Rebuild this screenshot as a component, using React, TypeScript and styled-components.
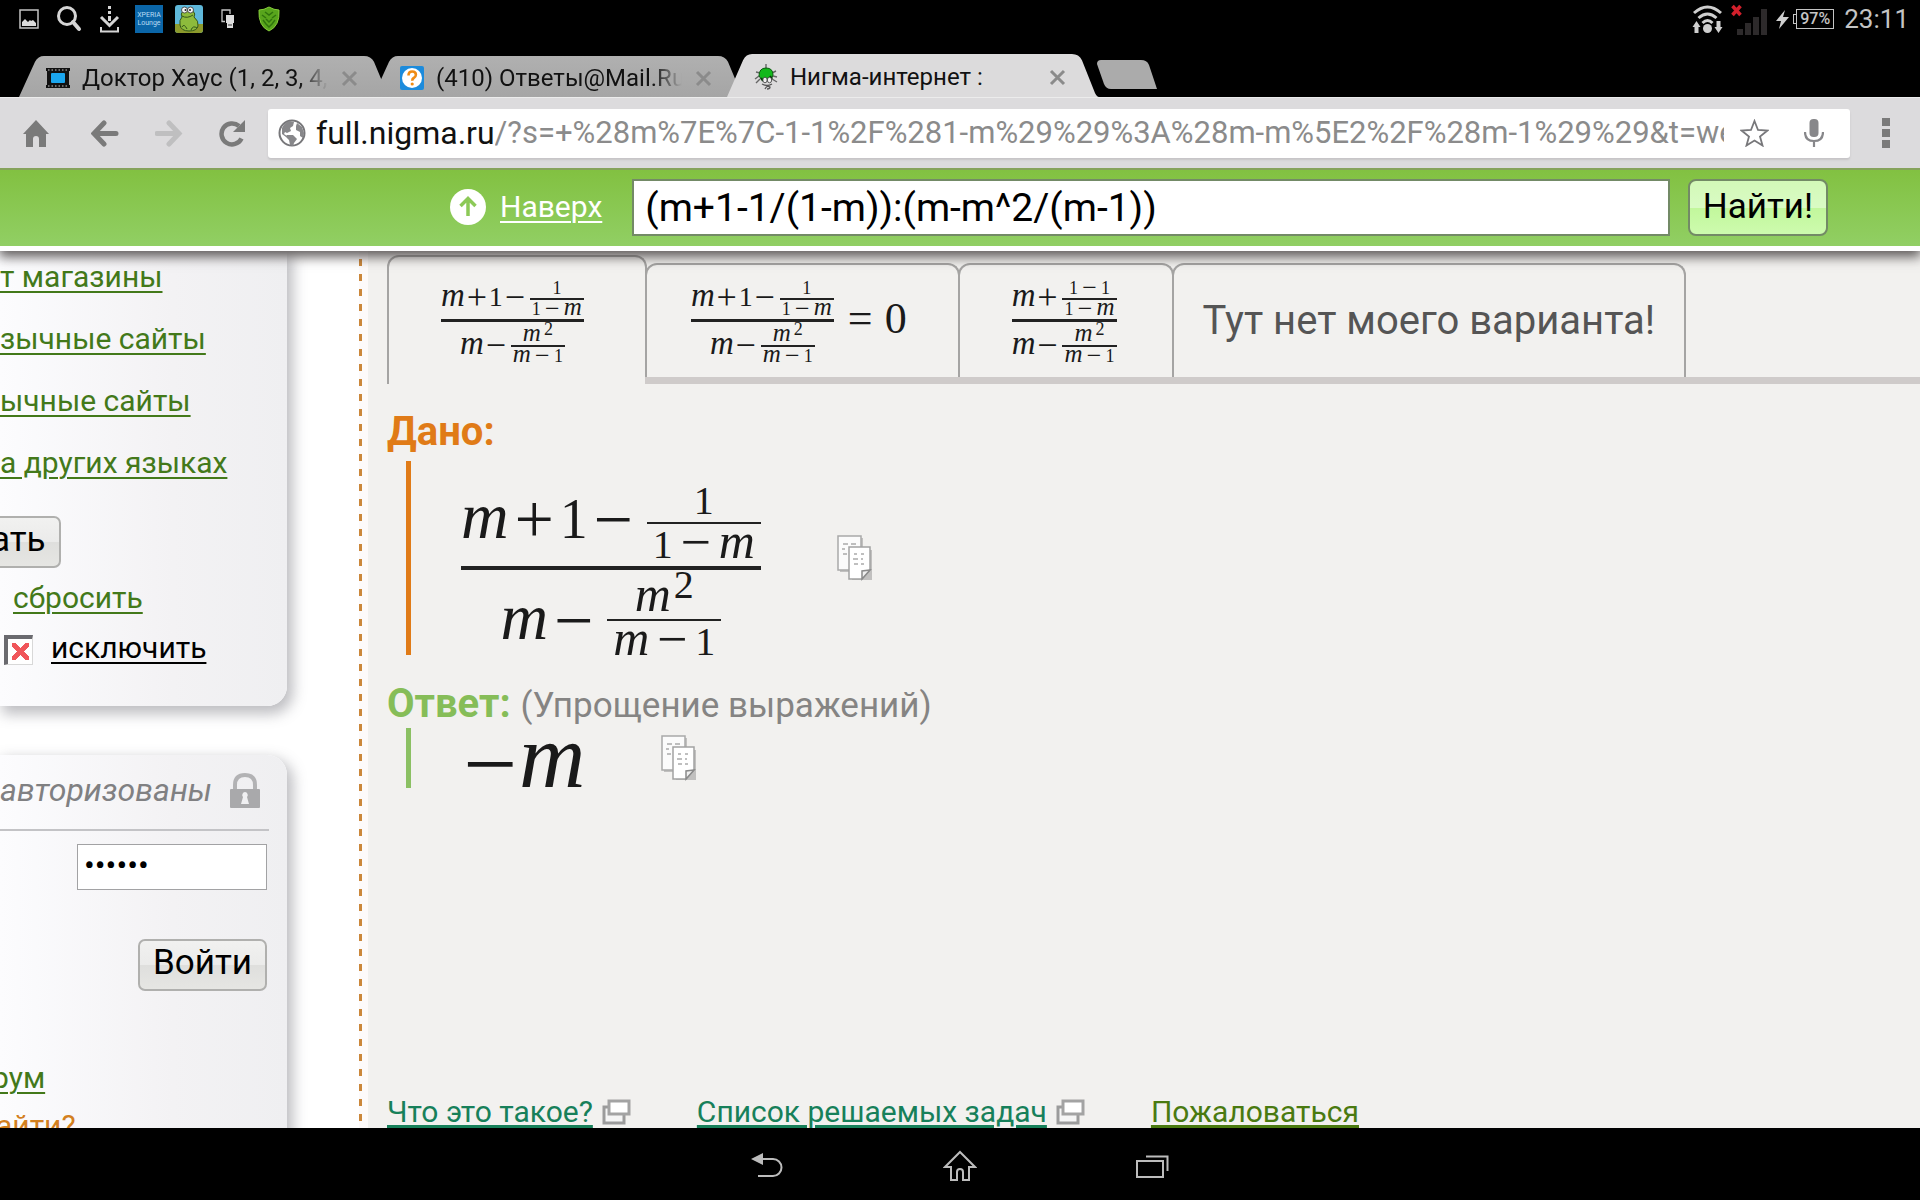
import React from "react";
import styled, { createGlobalStyle, css } from "styled-components";

const Global = createGlobalStyle`
  *, *::before, *::after { box-sizing: border-box; }
  html, body { margin: 0; padding: 0; background: #000; }
  body, button, input { font-family: Roboto, "Noto Sans", sans-serif; }
  button { margin: 0; cursor: pointer; }
`;

const Device = styled.div`
  display: flex;
  flex-direction: column;
  height: 100vh;
  overflow: hidden;
  background: #000;
`;

/* ---------- system status bar ---------- */

const StatusBar = styled.div`
  display: flex;
  justify-content: space-between;
  align-items: center;
  height: 38px;
  padding: 0 11px 0 19px;
  color: #c4c4c4;
`;

const StatusGroup = styled.div<{ $gap: number }>`
  display: flex;
  align-items: center;
  gap: ${(p) => p.$gap}px;
`;

const LoungeBadge = styled.span`
  display: flex;
  flex-direction: column;
  justify-content: center;
  align-items: center;
  width: 28px;
  height: 28px;
  background: #0b66a8;
  color: #b8dcf5;
  font-size: 7px;
  line-height: 8px;
`;

const Battery = styled.span`
  display: flex;
  align-items: center;
  margin-left: -3px;

  &::before {
    content: "";
    width: 3px;
    height: 10px;
    border: 1px solid #c4c4c4;
    border-right: 0;
  }
`;

const BatteryLevel = styled.span`
  display: flex;
  justify-content: center;
  align-items: center;
  width: 38px;
  height: 20px;
  border: 1px solid #c4c4c4;
  font-size: 16px;
  font-weight: 500;
  line-height: 18px;
`;

const Clock = styled.span`
  margin-left: 3px;
  font-size: 26px;
  line-height: 30px;
`;

/* ---------- browser tabs ---------- */

const TabStrip = styled.div`
  display: flex;
  align-items: flex-end;
  height: 59px;
  padding-left: 19px;
`;

const BrowserTab = styled.div<{ $active?: boolean }>`
  position: relative;
  display: flex;
  align-items: center;
  width: 372px;
  height: ${(p) => (p.$active ? 43 : 41)}px;
  margin-right: -18px;
  padding: 3px 33px 0 27px;
  z-index: ${(p) => (p.$active ? 2 : 1)};
`;

const TabShape = styled.svg`
  position: absolute;
  inset: 0;
  width: 100%;
  height: 100%;
  z-index: -1;
`;

const TabTitle = styled.span<{ $fade?: boolean }>`
  flex: 1;
  margin: 0 13px 0 12px;
  overflow: hidden;
  white-space: nowrap;
  color: #111;
  font-size: 24px;
  line-height: 30px;
  ${(p) =>
    p.$fade &&
    css`
      mask-image: linear-gradient(to right, #000 88%, transparent);
    `}
`;

const PlainButton = styled.button`
  display: flex;
  align-items: center;
  justify-content: center;
  padding: 0;
  border: 0;
  background: none;
  color: inherit;
`;

const NewTab = styled(PlainButton)`
  margin: 0 0 8px 16px;
`;

/* ---------- browser toolbar ---------- */

const Toolbar = styled.div`
  display: flex;
  align-items: center;
  height: 71px;
  padding: 0 30px 0 23px;
  border-top: 1px solid #ececec;
  background: #dcdbdd;
  color: #7a7a7a;
`;

const ToolButtons = styled.div`
  display: flex;
  gap: 36px;
  margin-right: 22px;
`;

const AddressBar = styled.div`
  display: flex;
  flex: 1;
  align-items: center;
  height: 49px;
  margin-right: 32px;
  padding: 0 26px 0 10px;
  border-radius: 3px;
  background: #fff;
  box-shadow: 0 2px 2px #c6c5c7;
  font-size: 32px;
  line-height: 38px;
`;

const Host = styled.label`
  margin-left: 10px;
  color: #111;
`;

const Path = styled.input`
  flex: 1;
  min-width: 0;
  margin-right: 16px;
  padding: 0;
  border: 0;
  outline: 0;
  background: none;
  color: #8b8b8b;
  font-size: 31px;
  line-height: 38px;
`;

const MicButton = styled(PlainButton)`
  margin-left: 35px;
`;

/* ---------- site header ---------- */

const Page = styled.div`
  display: flex;
  flex: 1;
  flex-direction: column;
  min-height: 0;
  background: #fff;
`;

const SiteHeader = styled.form`
  position: relative;
  z-index: 3;
  display: flex;
  flex-shrink: 0;
  align-items: center;
  height: 83px;
  padding: 0 92px 2px 450px;
  border-top: 2px solid #86a35c;
  border-bottom: 5px solid #fff;
  background: linear-gradient(#82c141, #91cf64) padding-box;
  box-shadow: 0 5px 11px 1px rgba(60, 55, 55, 0.8);
  clip-path: inset(0 0 -30px 0);
`;

const UpLink = styled.a`
  display: flex;
  align-items: center;
  gap: 14px;
  margin-right: 30px;
  color: #fff;
  font-size: 30px;
  line-height: 36px;
  text-underline-offset: 4px;
  text-decoration-thickness: 2px;
`;

const SearchInput = styled.input`
  flex: 1;
  min-width: 0;
  height: 57px;
  margin-right: 18px;
  padding: 2px 0 0 11px;
  border: 2px solid #738a66;
  background: #fff;
  color: #000;
  font-size: 39px;
`;

const FindButton = styled.button`
  height: 57px;
  padding: 0 13px;
  border: 2px solid #738a66;
  border-radius: 8px;
  background: linear-gradient(#d3f9b8, #d9fbc4 50%, #c2f79c 51%, #cdfbae);
  color: #000;
  font-size: 35px;
  line-height: 40px;
`;

/* ---------- sidebar ---------- */

const Columns = styled.div`
  display: flex;
  flex: 1;
  min-height: 0;
  overflow: hidden;
`;

const Sidebar = styled.aside`
  display: flex;
  flex-direction: column;
  gap: 49px;
  width: 359px;
  flex-shrink: 0;
`;

const Card = styled.section<{ $last?: boolean }>`
  display: flex;
  flex-direction: column;
  align-items: flex-start;
  width: 287px;
  flex-shrink: 0;
  border-radius: ${(p) => (p.$last ? "0 20px 0 0" : "0 0 20px 0")};
  padding: ${(p) => (p.$last ? "16px 0 0" : "8px 0 40px")};
  background: linear-gradient(to right, #fcfcfe, #f3f2f4 60%, #efeff1);
  box-shadow: 4px 6px 14px 2px rgba(90, 90, 100, 0.4);
  white-space: nowrap;
`;

const LinkList = styled.nav`
  display: flex;
  flex-direction: column;
  align-items: flex-start;
  gap: 26px;
`;

const SideLink = styled.a<{ $color?: string; $indent?: number; $gap?: number }>`
  margin: ${(p) => p.$gap ?? 0}px 0 0 ${(p) => p.$indent ?? 0}px;
  color: ${(p) => p.$color ?? "#43791a"};
  font-size: 30px;
  line-height: 36px;
  text-underline-offset: 4px;
  text-decoration-thickness: 2px;
`;

const GreyButton = styled.button<{ $cut?: boolean }>`
  height: 52px;
  padding: 0 13px 4px;
  border: 2px solid #b0b0ae;
  border-radius: 7px;
  background: linear-gradient(#f1f1f0, #ebebea 50%, #dfdfdd 51%, #e6e6e3);
  color: #000;
  font-size: 35px;
  line-height: 40px;
  ${(p) =>
    p.$cut
      ? css`
          margin: 35px 0 12px -24px;
        `
      : css`
          align-self: flex-end;
          margin: 49px 20px 69px 0;
        `}
`;

const ExcludeRow = styled.label`
  display: flex;
  align-items: center;
  gap: 18px;
  margin: 14px 0 0 4px;
  color: #000;
  font-size: 30px;
  line-height: 36px;
  text-decoration: underline 2px;
  text-underline-offset: 4px;
`;

const CrossBox = styled.input`
  appearance: none;
  width: 29px;
  height: 30px;
  margin: 4px 0 0;
  border: 1px solid #d8d8d8;
  border-top: 4px solid #6a6a6f;
  border-left: 4px solid #6a6a6f;
  background:
    linear-gradient(45deg, transparent 40%, #f0565a 41%, #f0565a 59%, transparent 60%) center / 17px 17px no-repeat,
    linear-gradient(-45deg, transparent 40%, #f0565a 41%, #f0565a 59%, transparent 60%) center / 17px 17px no-repeat,
    #fff;
`;

const AuthTitle = styled.h2`
  display: flex;
  align-items: center;
  justify-content: space-between;
  width: 269px;
  height: 60px;
  margin: 0 0 13px;
  padding: 0 9px 20px 0;
  border-bottom: 2px solid #c3c3c6;
  color: #808082;
  font-size: 32px;
  font-style: italic;
  font-weight: 400;
  line-height: 40px;
`;

const Password = styled.input`
  align-self: flex-end;
  width: 190px;
  height: 46px;
  margin-right: 20px;
  padding: 0 6px 4px;
  border: 1px solid #a2a2a4;
  background: #fff;
  color: #000;
  font-size: 32px;
`;

const Divider = styled.div`
  width: 9px;
  flex-shrink: 0;
  background: linear-gradient(transparent 0 8px, #cb873a 8px 15px) left top / 3px 15px repeat-y #fdfafa;
`;

/* ---------- calculator ---------- */

const Main = styled.main`
  display: flex;
  flex: 1;
  flex-direction: column;
  min-width: 0;
  padding: 4px 0 0 19px;
  background: #f2f1ef;
`;

const Variants = styled.div`
  display: flex;
  align-items: flex-end;
  flex-shrink: 0;
  height: 129px;
`;

const VariantSlot = styled.div<{ $active?: boolean; $grow?: boolean }>`
  display: flex;
  height: ${(p) => (p.$active ? 129 : 121)}px;
  margin-right: ${(p) => (p.$grow ? 0 : -2)}px;
  border-bottom: ${(p) => (p.$active ? "0" : "7px solid #cfcbca")};
  flex: ${(p) => (p.$grow ? "1" : "none")};
`;

const VariantTab = styled.button<{ $pad: string }>`
  display: flex;
  align-items: center;
  padding: ${(p) => p.$pad};
  border: 2px solid #a5a4a3;
  border-bottom: 0;
  border-radius: 12px 12px 0 0;
  background: #f2f1ef;
  color: #555;
  font-size: 40px;
  line-height: 48px;
`;

const Heading = styled.h1<{ $color: string; $space: number }>`
  flex-shrink: 0;
  margin: 0 0 ${(p) => p.$space}px;
  color: ${(p) => p.$color};
  font-size: 40px;
  font-weight: 700;
  line-height: 44px;
`;

const Note = styled.span`
  color: #858483;
  font-size: 35px;
  font-weight: 400;
`;

const Block = styled.div<{ $color: string; $height: number; $top: number }>`
  display: flex;
  align-items: center;
  gap: 76px;
  flex-shrink: 0;
  height: ${(p) => p.$height}px;
  margin-left: 19px;
  padding-left: 50px;
  overflow: hidden;
  border-left: 5px solid ${(p) => p.$color};

  > :first-child {
    align-self: flex-start;
    margin-top: ${(p) => p.$top}px;
  }
`;

const Given = styled.section`
  margin: 26px 0 27px;
`;

const Footer = styled.footer`
  display: flex;
  align-items: center;
  margin-top: auto;
  font-size: 30px;
  line-height: 32px;
  white-space: nowrap;
`;

const FooterLink = styled.a<{ $color: string }>`
  margin-right: 9px;
  color: ${(p) => p.$color};
  text-underline-offset: 3px;
  text-decoration-thickness: 3px;
`;

const FooterItem = styled.span`
  display: flex;
  align-items: center;
  margin-right: 66px;
`;

/* ---------- formulas ---------- */

const scales = {
  small: { base: 28, v: 33, op: 36, opWidth: 24, drop: 3, lift: 4, lowLift: 2, gap: 3, inner: 18, innerV: 25, innerOp: 26, innerOpWidth: 23, innerDrop: 2, side: 2, line: 19, bar: 2, main: 3, below: 4, rise: 6 },
  large: { base: 56, v: 66, op: 70, opWidth: 51, drop: 5, lift: 8, lowLift: 0, gap: 8, inner: 40, innerV: 50, innerOp: 54, innerOpWidth: 46, innerDrop: 2, side: 6, line: 42, bar: 2, main: 4, below: 7, rise: 13 },
};
type Scale = (typeof scales)["small"];

const Maths = styled.span`
  display: inline-flex;
  align-items: center;
  color: #1a1a1a;
  font-family: "Liberation Serif", "Times New Roman", serif;
  white-space: nowrap;
`;

const Row = styled.span<{ $gap: number }>`
  display: flex;
  align-items: center;
  gap: ${(p) => p.$gap}px;
`;

const Terms = styled.span<{ $size: number; $line: number; $lift?: number; $side?: number }>`
  display: block;
  height: ${(p) => p.$line}px;
  margin-bottom: ${(p) => p.$lift ?? 0}px;
  padding: 0 ${(p) => p.$side ?? 0}px;
  font-size: ${(p) => p.$size}px;
  line-height: ${(p) => p.$line}px;
`;

const Var = styled.i<{ $size: number }>`
  font-size: ${(p) => p.$size}px;
  line-height: 0;
`;

const Op = styled.span<{ $size: number; $width: number; $drop: number }>`
  display: inline-block;
  width: ${(p) => p.$width}px;
  text-align: center;
  font-size: ${(p) => p.$size}px;
  line-height: 0;
  vertical-align: -${(p) => p.$drop}px;
`;

const Power = styled.span<{ $rise: number }>`
  margin-left: 3px;
  line-height: 0;
  vertical-align: ${(p) => p.$rise}px;
`;

const Frac = styled.span`
  display: flex;
  flex-direction: column;
  align-items: center;
`;

const Bar = styled.span<{ $thick: number; $after?: number }>`
  align-self: stretch;
  height: ${(p) => p.$thick}px;
  margin-bottom: ${(p) => p.$after ?? 0}px;
  background: #222;
`;

const Equals = styled.span`
  display: flex;
  gap: 12px;
  margin: 0 0 8px 14px;
  font-size: 44px;
  line-height: 48px;
`;

function Inner({ s, top, bottom }: { s: Scale; top: React.ReactNode; bottom: React.ReactNode }) {
  return (
    <Frac>
      <Terms $size={s.inner} $line={s.line} $side={s.side}>{top}</Terms>
      <Bar $thick={s.bar} />
      <Terms $size={s.inner} $line={s.line} $side={s.side}>{bottom}</Terms>
    </Frac>
  );
}

function Expression({ scale, merged }: { scale: "small" | "large"; merged?: boolean }) {
  const s = scales[scale];
  const m = <Var $size={s.innerV}>m</Var>;
  const minus = <Op $size={s.innerOp} $width={s.innerOpWidth} $drop={s.innerDrop}>−</Op>;
  const op = (sign: string) => <Op $size={s.op} $width={s.opWidth} $drop={s.drop}>{sign}</Op>;
  return (
    <Frac>
      <Row $gap={s.gap}>
        <Terms $size={s.base} $line={s.base} $lift={s.lift}>
          <Var $size={s.v}>m</Var>
          {op("+")}
          {!merged && <>1{op("−")}</>}
        </Terms>
        <Inner s={s} top={merged ? <>1{minus}1</> : "1"} bottom={<>1{minus}{m}</>} />
      </Row>
      <Bar $thick={s.main} $after={s.below} />
      <Row $gap={s.gap}>
        <Terms $size={s.base} $line={s.base} $lift={s.lowLift}>
          <Var $size={s.v}>m</Var>
          {op("−")}
        </Terms>
        <Inner s={s} top={<>{m}<Power $rise={s.rise}>2</Power></>} bottom={<>{m}{minus}1</>} />
      </Row>
    </Frac>
  );
}

/* ---------- drawings ---------- */

function CopyIcon() {
  return (
    <svg width="36" height="46" viewBox="0 0 36 46" aria-hidden="true">
      <rect x="3" y="3" width="23" height="34" fill="#0003" />
      <rect x="1" y="1" width="23" height="34" fill="#fbfbfb" stroke="#a9a9a9" strokeWidth="1.5" />
      <path d="M6 9h5M14 9h5M5 14h3M6 19h4" stroke="#aaa" strokeWidth="1.5" />
      <path d="M15 15h20v30h-20z" fill="#0003" />
      <path d="M12 12h21v23l-8 9H12z" fill="#fff" stroke="#a2a2a2" strokeWidth="1.5" />
      <path d="M25 44v-8l8-1z" fill="#f0f0f0" stroke="#8a8a8a" strokeWidth="1.5" />
      <path d="M17 19h3M24 19h3M16 24h5M24 24h2M17 29h4M24 29h3" stroke="#aaa" strokeWidth="1.5" />
    </svg>
  );
}

function WindowsIcon() {
  return (
    <svg width="29" height="26" viewBox="0 0 29 26" aria-hidden="true">
      <path d="M2 8h20v16H2z" fill="#f5f5f5" stroke="#9b9b9b" strokeWidth="3" />
      <path d="M7 2h20v13H7z" fill="#fff" stroke="#a3a3a3" strokeWidth="3" />
    </svg>
  );
}

function CloseIcon() {
  return (
    <svg width="17" height="17" viewBox="0 0 17 17" aria-hidden="true">
      <path d="M2 2l13 13M15 2L2 15" stroke="#8b8b8b" strokeWidth="3" />
    </svg>
  );
}

function BrowserTabShape({ active }: { active?: boolean }) {
  return (
    <TabShape viewBox="0 0 371 42" preserveAspectRatio="none" aria-hidden="true">
      <defs>
        <linearGradient id="tabGrey" x1="0" y1="0" x2="0" y2="1">
          <stop offset="0" stopColor="#b0b0b0" />
          <stop offset="1" stopColor="#a5a5a5" />
        </linearGradient>
      </defs>
      <path
        d="M0 42L16 6Q19 0 25 0H344Q351 0 354 6L367 38Q369 42 371 42Z"
        fill={active ? "#dcdbdc" : "url(#tabGrey)"}
      />
    </TabShape>
  );
}

function FilmIcon() {
  return (
    <svg width="24" height="20" viewBox="0 0 24 20" aria-hidden="true">
      <path d="M0 0h24v3h-1v14h1v3H0v-3h1V3H0z" fill="#111" />
      <rect x="5" y="5" width="14" height="10" rx="1" fill="#1ba6ee" />
      <path d="M2 2h20M2 18h20" stroke="#8a8a8a" strokeWidth="1.5" strokeDasharray="1.5 2" />
    </svg>
  );
}

function QuestionIcon() {
  return (
    <svg width="24" height="24" viewBox="0 0 24 24" aria-hidden="true">
      <rect width="24" height="24" rx="2" fill="#1c8bdc" />
      <circle cx="12" cy="12" r="10" fill="#fff" />
      <path d="M8.500 9.500q0-4 3.700-4t3.700 3.300q0 2-2.200 3.200-1.500.8-1.500 2.800" fill="none" stroke="#f08c14" strokeWidth="2.6" />
      <circle cx="12.2" cy="18" r="1.6" fill="#f08c14" />
    </svg>
  );
}

function NigmaIcon() {
  return (
    <svg width="24" height="26" viewBox="0 0 24 26" aria-hidden="true">
      <path d="M12 0v5M6 9L2 8M5 12l-4 3M6 15l-4 4M18 9l4-2M19 12l4 1M18 15l5 3" stroke="#666" strokeWidth="1.4" fill="none" />
      <path d="M5 12q0-8 7-8t7 7l-2 5H8z" fill="#12b81b" stroke="#0a5d10" strokeWidth="1" />
      <path d="M7 14l2 3M16 12l2 3" stroke="#073d0b" strokeWidth="2" />
      <ellipse cx="11" cy="16" rx="2.2" ry="2.8" fill="#eee" stroke="#333" strokeWidth="0.8" />
      <ellipse cx="15.5" cy="16" rx="2.2" ry="2.8" fill="#eee" stroke="#333" strokeWidth="0.8" />
      <path d="M8 20q5 3 10 0M11 25q2-4 5-2 0 2-3 2" stroke="#555" strokeWidth="1.3" fill="none" />
    </svg>
  );
}

function StatusLeft() {
  return (
    <StatusGroup $gap={12}>
      <svg width="24" height="20" viewBox="0 0 24 20" aria-hidden="true">
        <rect x="1" y="1" width="18" height="18" fill="none" stroke="#c4c4c4" strokeWidth="1.5" />
        <path d="M3 17v-4l3-3 3 3 2-2 1 1 2-1 3 3v3z" fill="#dcdcdc" />
      </svg>
      <svg width="32" height="26" viewBox="0 0 32 26" aria-hidden="true">
        <circle cx="12" cy="10" r="8.5" fill="none" stroke="#d5d5d5" strokeWidth="3" />
        <path d="M18 16l6 7" stroke="#d5d5d5" strokeWidth="4" strokeLinecap="round" />
      </svg>
      <svg width="24" height="27" viewBox="0 0 24 27" aria-hidden="true">
        <path d="M9 0h3v3H9zM9 5h3v3H9zM9 10h3v5H9z" fill="#d5d5d5" />
        <path d="M2 11l8.500 8.500L19 11" fill="none" stroke="#d5d5d5" strokeWidth="3" />
        <path d="M2 21v4.500h17V21" fill="none" stroke="#d5d5d5" strokeWidth="2" />
      </svg>
      <LoungeBadge>
        <span>XPERIA</span>
        <span>Lounge</span>
      </LoungeBadge>
      <svg width="28" height="28" viewBox="0 0 28 28" aria-hidden="true">
        <rect width="28" height="28" rx="3" fill="#5fb8da" />
        <path d="M0 19h28v6q0 3-3 3H3q-3 0-3-3z" fill="#8c9a2c" />
        <path d="M5 20q-1-5 2-8-2-3 1-6 5-3 10 0 3 3 1 6 5 4 4 9-1 5-9 5t-9-6z" fill="#8dbb3c" stroke="#33551a" strokeWidth="1" />
        <path d="M7 11q5 3 11-1M7 22q2-4 5 2M16 25q2-5 6-2" fill="none" stroke="#33551a" strokeWidth="1" />
        <circle cx="9.5" cy="5" r="3" fill="#f4f4f4" stroke="#333" strokeWidth="0.8" />
        <circle cx="15.5" cy="5" r="3" fill="#f4f4f4" stroke="#333" strokeWidth="0.8" />
        <circle cx="10.5" cy="5" r="1" fill="#222" />
        <circle cx="15" cy="5" r="1" fill="#222" />
      </svg>
      <svg width="24" height="20" viewBox="-4 0 24 20" aria-hidden="true">
        <path d="M6 12.500H3V1h8v4" fill="none" stroke="#c4c4c4" strokeWidth="1.3" />
        <path d="M7 6h8v8H7zM8 14h6v5H8z" fill="#dcdcdc" />
        <path d="M10 15v2M12 15v2" stroke="#333" strokeWidth="1" />
      </svg>
      <svg width="30" height="26" viewBox="-6 0 30 26" aria-hidden="true">
        <path d="M12 1q5 3 10 3 1 16-10 21Q1 20 2 4q5 0 10-3z" fill="#58a51c" stroke="#86cc3a" strokeWidth="1" />
        <path d="M8 6l4 3 4-3M5 9l4 3M19 9l-4 3M9 13l3 3 3-3M6 14l3 4 3 3 3-3 3-4" fill="none" stroke="#2f740d" strokeWidth="1.5" />
      </svg>
    </StatusGroup>
  );
}

function StatusRight() {
  return (
    <StatusGroup $gap={7}>
      <svg width="32" height="29" viewBox="0 0 32 29" aria-hidden="true">
        <path d="M2 8q13.500-12 27 0M6.500 13q9-8 18 0M10.500 18q5-5 10 0" fill="none" stroke="#cfcfcf" strokeWidth="3" />
        <circle cx="15.5" cy="23.5" r="4.5" fill="#cfcfcf" />
        <path d="M4.500 16l4 6h-2v6h-4v-6H.5zM26.500 28l4-6h-2v-6h-4v6h-2z" fill="#cfcfcf" />
      </svg>
      <svg width="38" height="32" viewBox="0 0 38 32" aria-hidden="true">
        <path d="M6 26h6v6H6zM14 20h6v12h-6zM22 14h6v18h-6zM30 6h6v26h-6z" fill="#2d2a2b" />
        <path d="M1.500 3l8 9M9.500 3l-8 9" stroke="#d3202c" strokeWidth="3.5" />
      </svg>
      <svg width="13" height="19" viewBox="0 0 13 19" aria-hidden="true">
        <path d="M9 0L0 11h5l-2 8L13 7H7z" fill="#cfcfcf" />
      </svg>
      <Battery>
        <BatteryLevel>97%</BatteryLevel>
      </Battery>
      <Clock>23:11</Clock>
    </StatusGroup>
  );
}

const siteLinks = ["т магазины", "зычные сайты", "ычные сайты", "а других языках"];

export default function App() {
  return (
    <Device>
      <Global />
      <StatusBar>
        <StatusLeft />
        <StatusRight />
      </StatusBar>

      <TabStrip>
        <BrowserTab>
          <BrowserTabShape />
          <FilmIcon />
          <TabTitle $fade>Доктор Хаус (1, 2, 3, 4,</TabTitle>
          <PlainButton aria-label="Закрыть вкладку"><CloseIcon /></PlainButton>
        </BrowserTab>
        <BrowserTab>
          <BrowserTabShape />
          <QuestionIcon />
          <TabTitle $fade>(410) Ответы@Mail.Ru</TabTitle>
          <PlainButton aria-label="Закрыть вкладку"><CloseIcon /></PlainButton>
        </BrowserTab>
        <BrowserTab $active>
          <BrowserTabShape active />
          <NigmaIcon />
          <TabTitle>Нигма-интернет :</TabTitle>
          <PlainButton aria-label="Закрыть вкладку"><CloseIcon /></PlainButton>
        </BrowserTab>
        <NewTab aria-label="Новая вкладка">
          <svg width="60" height="29" viewBox="0 0 60 29" aria-hidden="true">
            <path d="M4 0H44Q50 0 52 5L60 29H14Q9 29 7 24L0 4Q0 0 4 0Z" fill="#ababab" />
          </svg>
        </NewTab>
      </TabStrip>

      <Toolbar>
        <ToolButtons>
          <PlainButton aria-label="Домой">
            <svg width="32" height="27" viewBox="0 0 32 27" aria-hidden="true">
              <path d="M13 0L26 14h-3v13h-7v-8q0-3-3-3t-3 3v8H3V14H0z" fill="currentColor" />
            </svg>
          </PlainButton>
          <PlainButton aria-label="Назад">
            <svg width="28" height="27" viewBox="0 0 28 27" aria-hidden="true">
              <path d="M13 3L3 13.500 13 24M4 13.500h21" fill="none" stroke="currentColor" strokeWidth="5" strokeLinecap="round" />
            </svg>
          </PlainButton>
          <PlainButton aria-label="Вперёд">
            <svg width="28" height="27" viewBox="0 0 28 27" aria-hidden="true">
              <path d="M14 3l10 10.500L14 24M23 13.500H2" fill="none" stroke="#bfbfc0" strokeWidth="5" strokeLinecap="round" />
            </svg>
          </PlainButton>
          <PlainButton aria-label="Обновить">
            <svg width="27" height="27" viewBox="0 0 27 27" aria-hidden="true">
              <path d="M22.500 18.500A10.500 10.500 0 1 1 20 6" fill="none" stroke="currentColor" strokeWidth="4.5" />
              <path d="M26 0v12H14z" fill="currentColor" />
            </svg>
          </PlainButton>
        </ToolButtons>
        <AddressBar>
          <svg width="28" height="28" viewBox="0 0 28 28" aria-hidden="true">
            <circle cx="14" cy="14" r="12.5" fill="#fff" stroke="#77777a" strokeWidth="2" />
            <path d="M4 9q2-5 7-7l5 1-1 4-3 2 1 3-4 2-2-1-1 2 3 2-1 1-4-3zM9 16l6 0 4 4-3 4-1 3-3-1-1-5-3-3zM19 4l5 4 2 6-1 5-3-2 0-4-4-2 0-4z" fill="#87878a" />
          </svg>
          <Host htmlFor="address">full.nigma.ru</Host>
          <Path
            id="address"
            readOnly
            value="/?s=+%28m%7E%7C-1-1%2F%281-m%29%29%3A%28m-m%5E2%2F%28m-1%29%29&t=we"
          />
          <PlainButton aria-label="В закладки">
            <svg width="29" height="28" viewBox="0 0 29 28" aria-hidden="true">
              <path d="M14.500 2l3.500 9 9.500.5-7.500 6 2.500 9-8-5-8 5 2.500-9-7.500-6 9.500-.5z" fill="#fff" stroke="#77777a" strokeWidth="1.8" />
            </svg>
          </PlainButton>
          <MicButton aria-label="Голосовой поиск">
            <svg width="20" height="28" viewBox="0 0 20 28" aria-hidden="true">
              <rect x="5.5" y="0" width="9" height="18" rx="4" fill="#87878a" />
              <path d="M1 13q0 9 9 9t9-9M10 22v6" fill="none" stroke="#87878a" strokeWidth="2.2" />
            </svg>
          </MicButton>
        </AddressBar>
        <PlainButton aria-label="Меню">
          <svg width="8" height="30" viewBox="0 0 8 30" aria-hidden="true">
            <path d="M0 0h8v8H0zM0 11h8v8H0zM0 22h8v8H0z" fill="currentColor" />
          </svg>
        </PlainButton>
      </Toolbar>

      <Page>
        <SiteHeader onSubmit={(e) => e.preventDefault()}>
          <UpLink href="#top">
            <svg width="36" height="36" viewBox="0 0 36 36" aria-hidden="true">
              <circle cx="18" cy="18" r="18" fill="#fff" />
              <path d="M18 27V10M10.500 17L18 9.500l7.500 7.500" fill="none" stroke="#8cc957" strokeWidth="3.5" />
            </svg>
            Наверх
          </UpLink>
          <SearchInput aria-label="Поиск" defaultValue="(m+1-1/(1-m)):(m-m^2/(m-1))" />
          <FindButton type="submit">Найти!</FindButton>
        </SiteHeader>

        <Columns>
          <Sidebar>
            <Card>
              <LinkList>
                {siteLinks.map((text) => (
                  <SideLink key={text} href="#filter">{text}</SideLink>
                ))}
              </LinkList>
              <GreyButton $cut>ать</GreyButton>
              <SideLink href="#reset" $indent={13}>сбросить</SideLink>
              <ExcludeRow>
                <CrossBox type="checkbox" />
                исключить
              </ExcludeRow>
            </Card>
            <Card $last>
              <AuthTitle>
                авторизованы
                <svg width="30" height="35" viewBox="0 0 30 35" aria-hidden="true">
                  <path d="M5 17v-5Q5 2 15 2t10 10v5" fill="none" stroke="#b2b2b4" strokeWidth="4" />
                  <rect y="16" width="30" height="19" rx="1" fill="#a9a9ab" />
                  <path d="M15 19a3 3 0 0 1 2 5l2 7h-8l2-7a3 3 0 0 1 2-5z" fill="#f0f0f2" />
                </svg>
              </AuthTitle>
              <Password type="password" aria-label="Пароль" defaultValue="secret" />
              <GreyButton>Войти</GreyButton>
              <SideLink href="#forum" $indent={-8}>рум</SideLink>
              <SideLink as="span" $color="#d3801f" $indent={-4} $gap={12}>айти?</SideLink>
            </Card>
          </Sidebar>
          <Divider />
          <Main>
            <Variants>
              <VariantSlot $active>
                <VariantTab $pad="3px 61px 0 52px">
                  <Maths><Expression scale="small" /></Maths>
                </VariantTab>
              </VariantSlot>
              <VariantSlot>
                <VariantTab $pad="3px 51px 0 44px">
                  <Maths>
                    <Expression scale="small" />
                    <Equals><span>=</span><span>0</span></Equals>
                  </Maths>
                </VariantTab>
              </VariantSlot>
              <VariantSlot>
                <VariantTab $pad="3px 55px 0 52px">
                  <Maths><Expression scale="small" merged /></Maths>
                </VariantTab>
              </VariantSlot>
              <VariantSlot>
                <VariantTab $pad="0 29px 1px">Тут нет моего варианта!</VariantTab>
              </VariantSlot>
              <VariantSlot $grow />
            </Variants>

            <Given>
              <Heading $color="#e07b17" $space={7}>Дано:</Heading>
              <Block $color="#e07b17" $height={194} $top={19}>
                <Maths><Expression scale="large" /></Maths>
                <PlainButton aria-label="Копировать"><CopyIcon /></PlainButton>
              </Block>
            </Given>

            <section>
              <Heading $color="#86bd58" $space={0}>
                Ответ: <Note>(Упрощение выражений)</Note>
              </Heading>
              <Block $color="#8bc063" $height={60} $top={10}>
                <Maths>
                  <Terms $size={56} $line={60}>
                    <Op $size={96} $width={58} $drop={9}>−</Op>
                    <Var $size={92}>m</Var>
                  </Terms>
                </Maths>
                <PlainButton aria-label="Копировать"><CopyIcon /></PlainButton>
              </Block>
            </section>

            <Footer>
              <FooterItem>
                <FooterLink href="#about" $color="#17805a">Что это такое?</FooterLink>
                <WindowsIcon />
              </FooterItem>
              <FooterItem>
                <FooterLink href="#tasks" $color="#17805a">Список решаемых задач</FooterLink>
                <WindowsIcon />
              </FooterItem>
              <FooterLink href="#report" $color="#4a7a10">Пожаловаться</FooterLink>
            </Footer>
          </Main>
        </Columns>
      </Page>

      <SystemNav>
        <PlainButton aria-label="Назад">
          <svg width="33" height="26" viewBox="0 0 33 26" aria-hidden="true">
            <path d="M10 6h12a8.500 8.500 0 0 1 0 17H7" fill="none" stroke="#bcbcbc" strokeWidth="2" />
            <path d="M0 6L12 0v12z" fill="#bcbcbc" />
          </svg>
        </PlainButton>
        <PlainButton aria-label="Главный экран">
          <svg width="34" height="32" viewBox="0 0 34 32" aria-hidden="true">
            <path d="M17 2L32 17h-6v13h-6v-8q0-3-3-3t-3 3v8H8V17H2z" fill="none" stroke="#bcbcbc" strokeWidth="2" />
          </svg>
        </PlainButton>
        <PlainButton aria-label="Недавние">
          <svg width="33" height="23" viewBox="0 0 33 23" aria-hidden="true">
            <path d="M1 6h26v16H1zM10 1.500h21.500V16" fill="none" stroke="#bcbcbc" strokeWidth="2" />
          </svg>
        </PlainButton>
      </SystemNav>
    </Device>
  );
}

const SystemNav = styled.nav`
  display: flex;
  flex-shrink: 0;
  align-items: center;
  justify-content: center;
  gap: 159px;
  height: 72px;
  padding-top: 4px;
`;
